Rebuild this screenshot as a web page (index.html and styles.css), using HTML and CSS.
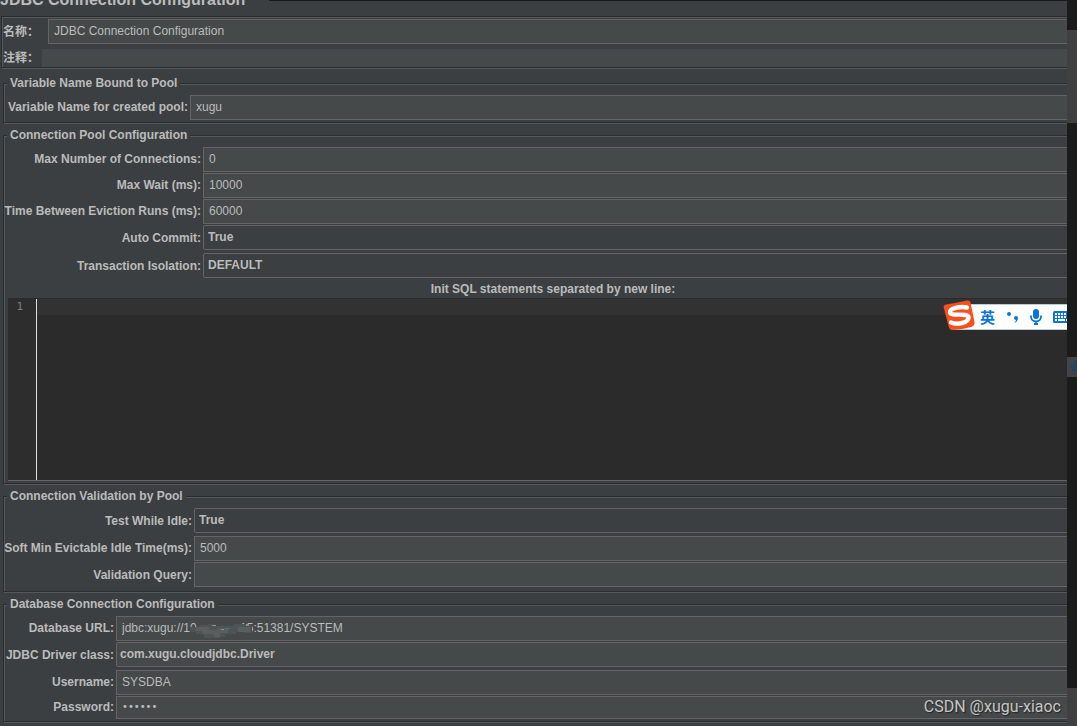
FILE: index.html
```
<!DOCTYPE html>
<html lang="zh-CN">

<head>
    <meta charset="UTF-8">
    <meta name="viewport" content="width=device-width, initial-scale=1.0">
    <title>JDBC Connection Configuration</title>
    <link rel="stylesheet" href="styles.css">
</head>

<body>
    <div class="window">
        <main class="panel">
            <form class="config">
                <h1 class="title">JDBC Connection Configuration</h1>

                <div class="info">
                    <div class="info_row">
                        <label for="name">名称：</label>
                        <input type="text" id="name" value="JDBC Connection Configuration">
                    </div>
                    <div class="info_row comment">
                        <label for="comment">注释：</label>
                        <input type="text" id="comment">
                    </div>
                </div>

                <fieldset class="group variable">
                    <legend>Variable Name Bound to Pool</legend>
                    <div class="row">
                        <label for="pool">Variable Name for created pool:</label>
                        <input type="text" id="pool" value="xugu">
                    </div>
                </fieldset>

                <fieldset class="group connection">
                    <legend>Connection Pool Configuration</legend>
                    <div class="row">
                        <label for="max">Max Number of Connections:</label>
                        <input type="text" id="max" value="0">
                    </div>
                    <div class="row">
                        <label for="wait">Max Wait (ms):</label>
                        <input type="text" id="wait" value="10000">
                    </div>
                    <div class="row">
                        <label for="eviction">Time Between Eviction Runs (ms):</label>
                        <input type="text" id="eviction" value="60000">
                    </div>
                    <div class="row combo">
                        <label for="commit">Auto Commit:</label>
                        <select id="commit">
                            <option>True</option>
                            <option>False</option>
                        </select>
                    </div>
                    <div class="row combo">
                        <label for="isolation">Transaction Isolation:</label>
                        <select id="isolation">
                            <option>DEFAULT</option>
                        </select>
                    </div>
                    <label class="caption" for="sql">Init SQL statements separated by new line:</label>
                    <div class="editor">
                        <div class="gutter">1</div>
                        <textarea id="sql" spellcheck="false"></textarea>
                    </div>
                </fieldset>

                <fieldset class="group validation">
                    <legend>Connection Validation by Pool</legend>
                    <div class="row combo">
                        <label for="idle">Test While Idle:</label>
                        <select id="idle">
                            <option>True</option>
                            <option>False</option>
                        </select>
                    </div>
                    <div class="row">
                        <label for="soft">Soft Min Evictable Idle Time(ms):</label>
                        <input type="text" id="soft" value="5000">
                    </div>
                    <div class="row combo">
                        <label for="query">Validation Query:</label>
                        <input type="text" id="query">
                    </div>
                </fieldset>

                <fieldset class="group database">
                    <legend>Database Connection Configuration</legend>
                    <div class="row url">
                        <label for="url">Database URL:</label>
                        <input type="text" id="url" value="jdbc:xugu://10            .15:51381/SYSTEM">
                        <!-- host is smeared out -->
                        <svg class="smear" width="76" height="20" viewBox="0 0 76 20" aria-hidden="true">
                            <path fill="#505354" d="M0 7h9V5h9V4h8v2h18V4h12v2h6v7h-8v-1H46v2H35v3h-6v1H14v-4H6v-2H0z"/>
                            <path fill="#5b5e5f" d="M6 7h13v3h9V8h10v5h-8v4h-6v-3H12v-3H6zM48 7h12v5H48z"/>
                            <path fill="#3f6fa0" d="M36 8h4v1h-4z"/>
                            <path fill="#8b8e90" d="M22 5h4v1h-4zM31 9h3v1h-3zM56 4h3v2h-3z"/>
                        </svg>
                    </div>
                    <div class="row combo">
                        <label for="driver">JDBC Driver class:</label>
                        <select id="driver" class="editable">
                            <option>com.xugu.cloudjdbc.Driver</option>
                        </select>
                    </div>
                    <div class="row">
                        <label for="user">Username:</label>
                        <input type="text" id="user" value="SYSDBA">
                    </div>
                    <div class="row">
                        <label for="password">Password:</label>
                        <input type="password" id="password" value="123456">
                    </div>
                </fieldset>
            </form>

            <!-- input method bar -->
            <div class="ime">
                <svg class="ime_logo" width="32" height="32" viewBox="0 0 32 32">
                    <path fill="#f4511e" d="M3 4.500Q13 3 24 .5Q27 0 27.500 2.500L31.500 22Q32 26 28 27Q18 30 9 30Q6.500 30 5.800 27L.8 8Q0 5 3 4.500z"/>
                    <path fill="none" stroke="#fff" stroke-width="4.400" stroke-linecap="round" d="M24 7.500C17 6 6.500 8.500 7 12.500C8 17 25.500 12 25.500 17.500C25.500 23 14 25 8 22.500"/>
                </svg>
                <span class="ime_lang">英</span>
                <svg width="14" height="14" viewBox="0 0 14 14" fill="#0a74da">
                    <circle cx="3" cy="4" r="2"/>
                    <path d="M8 8a2 2 0 1 1 4 0q0 4-4 5q2-1.500 2-3a2 2 0 0 1-2-2z"/>
                </svg>
                <svg class="ime_mic" width="12" height="16" viewBox="0 0 12 16">
                    <rect x="3" y="0" width="6" height="10" rx="3" fill="#0a74da"/>
                    <path fill="none" stroke="#0a74da" stroke-width="1.800" d="M1 6.500v1a5 5 0 0 0 10 0v-1M6 12.500V15M4 15h4"/>
                </svg>
                <svg class="ime_keys" width="18" height="12" viewBox="0 0 18 12">
                    <rect width="18" height="12" rx="1.500" fill="#0a74da"/>
                    <path stroke="#fff" stroke-width="2" d="M2 3h14M2 6h14" stroke-dasharray="2 1"/>
                    <path stroke="#fff" stroke-width="2" d="M2 9h2M5 9h7M13 9h2"/>
                </svg>
            </div>
        </main>

        <aside class="edge">
            <div class="edge_top"></div>
            <div class="edge_thumb"></div>
            <div class="edge_mid"></div>
            <div class="edge_tab">
                <svg width="12" height="16" viewBox="0 0 12 16">
                    <rect x="3" y="1" width="6" height="9" rx="3" fill="#1d4568"/>
                    <path fill="none" stroke="#1d4568" stroke-width="2" d="M1 6v1a5 5 0 0 0 10 0V6M6 12v3"/>
                </svg>
            </div>
            <div class="edge_low"></div>
            <div class="edge_thumb bottom"></div>
        </aside>
        <div class="watermark">CSDN @xugu-xiaoc</div>
    </div>
</body>

</html>
```

FILE: styles.css
```
* {
    box-sizing: border-box;
}

body {
    margin: 0;
    background-color: #3c3f41;
    color: #bbbbbb;
    font: bold 12px/14px "Liberation Sans", "Noto Sans CJK SC", sans-serif;
}

.window {
    display: flex;
    position: relative;
    height: 100vh;
    overflow: hidden;
}

.panel {
    position: relative;
    flex: 1;
    min-width: 0;
    overflow: hidden;
}

/* the form runs on past the right edge of the panel */
.config {
    margin-right: -36px;
}

.title {
    display: flex;
    align-items: flex-end;
    height: 16px;
    margin: 0;
    padding-bottom: 6px;
    background: linear-gradient(#1a1c1b, #1a1c1b) 269px 0 / 100% 1px no-repeat;
    font-size: 16px;
    line-height: 20px;
}

input,
select,
textarea {
    margin: 0;
    min-width: 0;
    border: 1px solid #646464;
    border-radius: 0;
    outline: none;
    background-color: #45494a;
    color: #bbbbbb;
    font: 12px/14px "Liberation Sans", sans-serif;
}

input {
    height: 25px;
    padding: 0 5px 2px;
}

select {
    appearance: none;
    height: 25px;
    padding: 0 4px 2px;
    border-radius: 2px;
    background-color: #3c3f41;
    font-weight: bold;
}

.editable {
    padding-left: 3px;
    background-color: #45494a;
}

/* etched frames */
.info,
.group {
    border: 1px solid #2b2d2f;
    box-shadow: 1px 1px 0 #555859, inset 1px 1px 0 #555859;
}

.info {
    margin-left: 1px;
    padding: 2px 0 0 1px;
}

.info_row {
    display: grid;
    grid-template-columns: 45px 1fr;
    align-items: center;
    margin-bottom: 5px;
}

.info_row.comment {
    grid-template-columns: 39px 1fr;
    margin-bottom: 0;
}

.info_row label {
    white-space: nowrap;
}

.comment input {
    height: 18px;
    border: none;
}

.group {
    min-width: 0;
    margin: 8px 0 0 3px;
    padding: 5px 4px 1px;
}

.group + .group {
    margin-top: 5px;
}

legend {
    margin-left: -1px;
    padding: 0 3px;
    background-color: #3c3f41;
}

.row {
    display: grid;
    align-items: center;
    margin-bottom: 1px;
}

.row.combo {
    margin-bottom: 3px;
}

.row label {
    justify-self: end;
    padding: 0 2px 2px 0;
    white-space: nowrap;
}

.row.combo label {
    padding-bottom: 0;
}

.variable .row {
    grid-template-columns: 182px 1fr;
}

.connection .row {
    grid-template-columns: 195px 1fr;
}

.validation .row {
    grid-template-columns: 186px 1fr;
}

.database .row {
    grid-template-columns: 108px 1fr;
}

.url {
    position: relative;
}

.smear {
    position: absolute;
    left: 182px;
    top: 4px;
}

#password {
    height: 23px;
    font: 10px/14px "DejaVu Sans", sans-serif;
}

.caption {
    display: block;
    line-height: 17px;
    text-align: center;
}

.editor {
    display: flex;
    height: 183px;
    margin-bottom: 1px;
    border-top: 1px solid #2b2b2b;
    border-bottom: 1px solid #646464;
    background-color: #2b2b2b;
}

.gutter {
    width: 29px;
    padding: 1px 13px 0 0;
    border-right: 1px solid #dddddd;
    background-color: #2d2d2d;
    color: #7c7f80;
    font: 11px/14px "DejaVu Sans Mono", monospace;
    text-align: right;
}

.editor textarea {
    flex: 1;
    border: none;
    resize: none;
    background: linear-gradient(#323232 16px, #2b2b2b 16px);
}

.ime {
    position: absolute;
    top: 304px;
    right: 0;
    display: flex;
    align-items: center;
    width: 115px;
    height: 26px;
    border-top: 1px solid #b8cde0;
    border-bottom: 1px solid #b8cde0;
    background-color: #ffffff;
}

.ime svg {
    flex: none;
}

.ime .ime_logo {
    margin: -3px 5px 0 -9px;
}

.ime_lang {
    flex: none;
    width: 26px;
    color: #0a74da;
    font: bold 15px/20px "Noto Sans CJK SC", sans-serif;
}

.ime .ime_mic {
    margin-left: 10px;
}

.ime .ime_keys {
    margin-left: 11px;
    margin-right: -4px;
}

.edge {
    display: flex;
    flex-direction: column;
    width: 10px;
    background-color: #1a1c1b;
}

.edge_top {
    height: 30px;
}

.edge_thumb {
    height: 93px;
    background-color: #404040;
}

.edge_mid {
    height: 234px;
}

.edge_tab {
    height: 20px;
    padding: 2px 0 0 4px;
    overflow: hidden;
    background-color: #434445;
}

.edge_low {
    height: 311px;
}

.edge_thumb.bottom {
    flex: 1;
}

.watermark {
    position: absolute;
    right: 16px;
    bottom: 10px;
    color: #c6c6c6;
    font: 16px/18px Roboto, sans-serif;
    text-shadow: 1px 1px 1px #222222;
}
```
